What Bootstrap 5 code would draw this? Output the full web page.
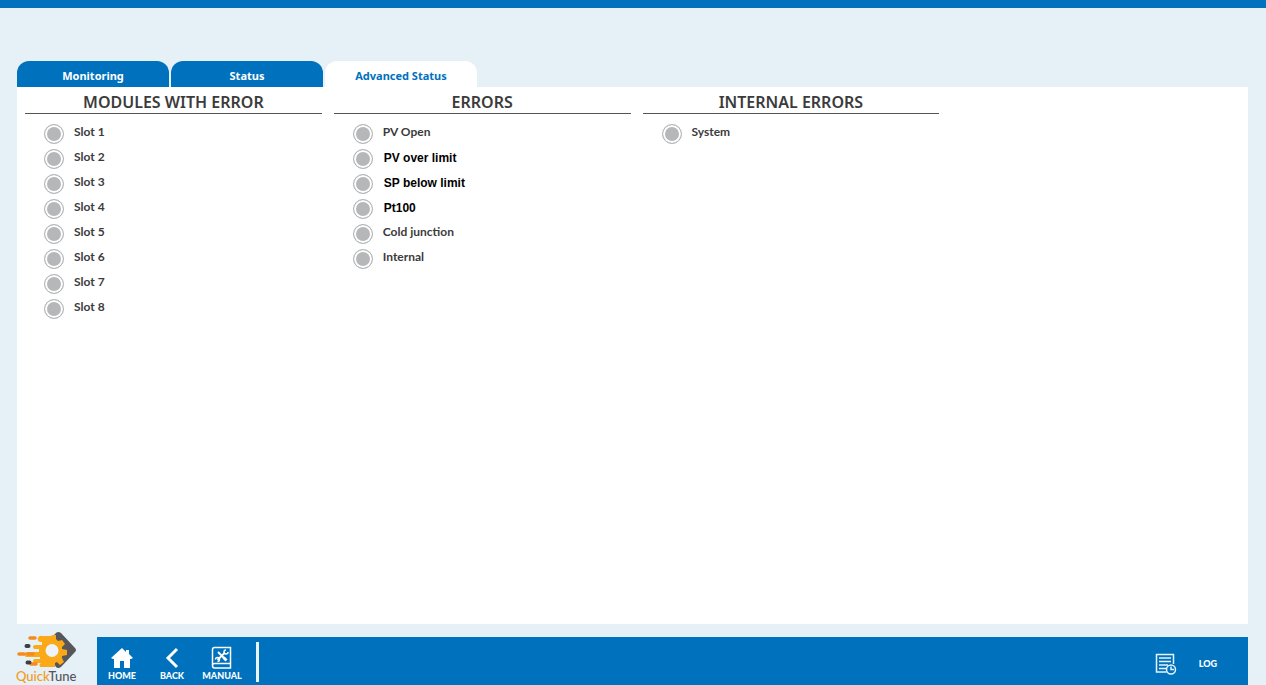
<!DOCTYPE html>
<html lang="en">
<head>
<meta charset="utf-8">
<meta name="viewport" content="width=device-width, initial-scale=1">
<title>QuickTune</title>
<link rel="stylesheet" href="https://cdn.jsdelivr.net/npm/bootstrap@5.3.0/dist/css/bootstrap.min.css">
<style>
  :root { --brand: #0071bd; --canvas: #e6f0f7; --ink: #3b3b3b; }
  body { background: var(--canvas); border-top: 8px solid var(--brand); font-family: "Noto Sans", sans-serif; color: var(--ink); }
  .workspace { margin: 53px 18px 0 17px; }
  .nav-tabs { gap: 2px; border: 0; }
  .nav-tabs .nav-link { width: 152px; height: 26px; margin: 0; padding: 3px 0 0; border: 0; border-radius: 12px 12px 0 0; background: var(--brand); color: #fff; font-size: 11px; line-height: 23px; font-weight: 700; }
  .nav-tabs .nav-link.active { background: #fff; color: var(--brand); }
  .panel { background: #fff; padding-left: 8px; }
  .status-grid { display: grid; grid-template-columns: repeat(4, 1fr); column-gap: 12px; }
  .status-grid h2 { margin: 0 0 8px; height: 27px; padding-top: 4px; border-bottom: 1px solid #555; font-size: 16px; line-height: 23px; font-weight: 600; text-align: center; }
  .status-grid li { height: 25px; padding-left: 19px; gap: 10px; font-family: Lato, sans-serif; font-size: 12px; line-height: 20px; font-weight: 700; }
  .led { width: 20px; height: 20px; margin-top: 2px; border: 1px solid #b4b6b8; border-radius: 50%; background: #b5b7b8; box-shadow: inset 0 0 0 2px #fff; }
  .status-grid .plain { font-family: "Liberation Sans", sans-serif; color: #000; line-height: 22px; gap: 11px; }
  .bottom { margin: 7px 18px 0 0; }
  .logo { width: 97px; height: 54px; }
  .toolbar { height: 48px; background: var(--brand); }
  .toolbar button { border: 0; padding: 0; background: none; color: #fff; width: 50px; font-family: Lato, sans-serif; font-size: 9px; line-height: 10px; font-weight: 900; }
  .toolbar .tool { padding-top: 4px; gap: 1px; }
  .toolbar .tool svg { height: 24px; width: 24px; }
  .divider { width: 3px; height: 40px; margin: 2px 0 0 9px; background: #e9f4fb; }
  .toolbar .log { width: auto; gap: 22px; margin-right: 31px; padding-top: 5px; }
</style>
</head>
<body class="d-flex flex-column min-vh-100">
<main class="workspace d-flex flex-column flex-grow-1">
  <ul class="nav nav-tabs" role="tablist">
    <li class="nav-item" role="presentation"><button type="button" class="nav-link" role="tab" aria-selected="false">Monitoring</button></li>
    <li class="nav-item" role="presentation"><button type="button" class="nav-link" role="tab" aria-selected="false">Status</button></li>
    <li class="nav-item" role="presentation"><button type="button" class="nav-link active" role="tab" aria-selected="true">Advanced Status</button></li>
  </ul>
  <div class="panel flex-grow-1" role="tabpanel">
    <div class="status-grid">
      <section>
        <h2>MODULES WITH ERROR</h2>
        <ul class="list-unstyled m-0">
          <li class="d-flex"><span class="led"></span>Slot 1</li>
          <li class="d-flex"><span class="led"></span>Slot 2</li>
          <li class="d-flex"><span class="led"></span>Slot 3</li>
          <li class="d-flex"><span class="led"></span>Slot 4</li>
          <li class="d-flex"><span class="led"></span>Slot 5</li>
          <li class="d-flex"><span class="led"></span>Slot 6</li>
          <li class="d-flex"><span class="led"></span>Slot 7</li>
          <li class="d-flex"><span class="led"></span>Slot 8</li>
        </ul>
      </section>
      <section>
        <h2>ERRORS</h2>
        <ul class="list-unstyled m-0">
          <li class="d-flex"><span class="led"></span>PV Open</li>
          <li class="d-flex plain"><span class="led"></span>PV over limit</li>
          <li class="d-flex plain"><span class="led"></span>SP below limit</li>
          <li class="d-flex plain"><span class="led"></span>Pt100</li>
          <li class="d-flex"><span class="led"></span>Cold junction</li>
          <li class="d-flex"><span class="led"></span>Internal</li>
        </ul>
      </section>
      <section>
        <h2>INTERNAL ERRORS</h2>
        <ul class="list-unstyled m-0">
          <li class="d-flex"><span class="led"></span>System</li>
        </ul>
      </section>
    </div>
  </div>
</main>
<footer class="bottom d-flex align-items-end">
  <svg class="logo flex-shrink-0" viewBox="0 0 97 54" role="img" aria-label="QuickTune">
    <path d="M56 2q2-2 5 0l14 15q2 2 0 4L61 36q-3 2-5 0l-3-5V8l-1-2z" fill="#57565b"/>
    <path d="M42 5h9l1-1h4v4l2 2 4-1 3 4-3 3v2l5 1v5l-5 1v2l2 4-4 3-3-3-2 1v4H42a2 2 0 0 1-1-4h-6a2 2 0 0 1 0-4h5v-2H27a2 2 0 0 1 0-5h12v-3h-4a2 2 0 0 1 0-4h7v-3h-2a2 2 0 0 1 2-6z" fill="#fba919"/>
    <path d="M30 7h5M19 23h5M28 23h5M31 33h5" stroke="#f58a20" stroke-width="3.500" stroke-linecap="round"/>
    <circle cx="52" cy="19.500" r="6.500" fill="#eef3f7"/>
    <path d="M26.500 15h2M27.500 31.500h2" stroke="#3f3f43" stroke-width="4" stroke-linecap="round"/>
    <text x="16" y="50" font-family="Lato, sans-serif" font-size="13" font-weight="500" fill="#f39a20">Quick<tspan fill="#55555a">Tune</tspan></text>
  </svg>
  <nav class="toolbar d-flex align-items-center flex-grow-1" aria-label="Main">
    <button type="button" class="tool d-flex flex-column align-items-center"><svg viewBox="0 0 24 24" fill="#fff" aria-hidden="true"><path d="M12 2 1 12l2 1h1v9h6v-7h4v7h6v-9h1l2-1-4-4V4h-3v2z"/></svg>HOME</button>
    <button type="button" class="tool d-flex flex-column align-items-center"><svg viewBox="0 0 24 24" fill="none" stroke="#fff" stroke-width="3" aria-hidden="true"><path d="m17 3-9 9 9 9"/></svg>BACK</button>
    <button type="button" class="tool d-flex flex-column align-items-center"><svg viewBox="0 0 24 24" fill="none" stroke="#fff" stroke-width="1.500" aria-hidden="true"><path d="M20.500 17.500V1.500H4.500Q2.500 1.500 2.500 3.500v16q0 2.500 2 2.500h16v-4.500h-16q-2 0-2 2"/><path stroke-width="1.800" d="m7.500 14 7.500-7.500M8 6l8 8"/><path stroke-width="1.400" d="M18 6a2 2 0 1 1-2-2M5.500 13.500a2 2 0 1 1 2 2"/><path stroke-width="3" d="m13.500 11.500 3 3"/></svg>MANUAL</button>
    <div class="divider"></div>
    <button type="button" class="log d-flex align-items-center ms-auto"><svg width="22" height="22" viewBox="0 0 22 22" fill="none" stroke="#e6f3fb" stroke-width="1.500" aria-hidden="true"><path d="M18.500 11V1.500h-17V19h10M4 5h12M4 8.500h12M4 12h9M4 15.500h7"/><circle cx="16" cy="16.500" r="4.500"/><path d="M16 13.500v3h3"/></svg>LOG</button>
  </nav>
</footer>
<script src="https://cdn.jsdelivr.net/npm/bootstrap@5.3.0/dist/js/bootstrap.bundle.min.js"></script>
</body>
</html>
